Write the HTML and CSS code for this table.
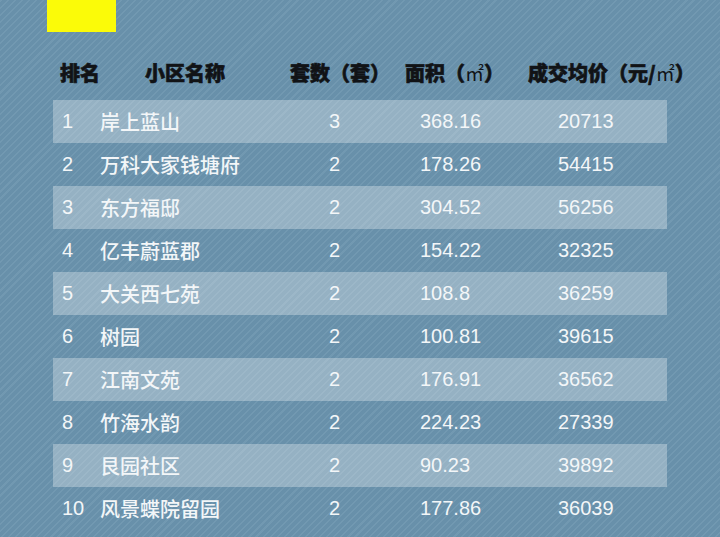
FILE: index.html
```html
<!DOCTYPE html>
<html lang="zh">
<head>
<meta charset="utf-8">
<link rel="stylesheet" href="styles.css">
</head>
<body>
<div class="page">
  <div class="tag"></div>
  <div class="head">
    <div>排名</div>
    <div>小区名称</div>
    <div>套数（套）</div>
    <div>面积（<span class="unit">㎡</span>）</div>
    <div>成交均价（元/<span class="unit">㎡</span>）</div>
  </div>
  <div class="table">
    <div class="row light"><div>1</div><div class="n">岸上蓝山</div><div class="c">3</div><div>368.16</div><div>20713</div></div>
    <div class="row"><div>2</div><div class="n">万科大家钱塘府</div><div class="c">2</div><div>178.26</div><div>54415</div></div>
    <div class="row light"><div>3</div><div class="n">东方福邸</div><div class="c">2</div><div>304.52</div><div>56256</div></div>
    <div class="row"><div>4</div><div class="n">亿丰蔚蓝郡</div><div class="c">2</div><div>154.22</div><div>32325</div></div>
    <div class="row light"><div>5</div><div class="n">大关西七苑</div><div class="c">2</div><div>108.8</div><div>36259</div></div>
    <div class="row"><div>6</div><div class="n">树园</div><div class="c">2</div><div>100.81</div><div>39615</div></div>
    <div class="row light"><div>7</div><div class="n">江南文苑</div><div class="c">2</div><div>176.91</div><div>36562</div></div>
    <div class="row"><div>8</div><div class="n">竹海水韵</div><div class="c">2</div><div>224.23</div><div>27339</div></div>
    <div class="row light"><div>9</div><div class="n">艮园社区</div><div class="c">2</div><div>90.23</div><div>39892</div></div>
    <div class="row"><div>10</div><div class="n">风景蝶院留园</div><div class="c">2</div><div>177.86</div><div>36039</div></div>
  </div>
</div>
</body>
</html>
```
FILE: styles.css
```css
html, body {
  margin: 0;
  padding: 0;
}
body {
  width: 720px;
  height: 537px;
  overflow: hidden;
  background-color: #6a93ad;
  background-image: repeating-linear-gradient(135deg, rgba(255,255,255,0.05) 0px, rgba(255,255,255,0.05) 1.5px, rgba(0,0,0,0.02) 1.5px, rgba(0,0,0,0.02) 5px);
  font-family: "Liberation Sans", "Noto Sans CJK SC", sans-serif;
}
.page {
  padding-left: 53px;
}
.tag {
  margin-left: -6px;
  width: 69px;
  height: 32px;
  background: #fbfb08;
}
.head {
  display: grid;
  grid-template-columns: 85px 145px 115px 123px auto;
  padding-left: 7px;
  margin-top: 28px;
  height: 26px;
  line-height: 26px;
  font-size: 20px;
  font-weight: 900;
  color: #111316;
  -webkit-text-stroke: 0.6px #111316;
  font-family: "Noto Sans CJK SC", sans-serif;
}
.head .unit {
  font-weight: normal;
  -webkit-text-stroke: 0;
  font-family: "Liberation Sans", "Noto Sans CJK SC", sans-serif;
  font-size: 19px;
}
.table {
  margin-top: 14px;
  width: 614px;
}
.row {
  display: grid;
  grid-template-columns: 38px 228px 92px 138px auto;
  padding-left: 9px;
  height: 43px;
  align-items: center;
  font-size: 20px;
  color: #f3f6f8;
}
.row .n {
  font-family: "Noto Sans CJK SC", sans-serif;
  font-weight: 500;
}
.row.light {
  background: rgba(255,255,255,0.3);
}
.row .c {
  padding-left: 1px;
}
```
